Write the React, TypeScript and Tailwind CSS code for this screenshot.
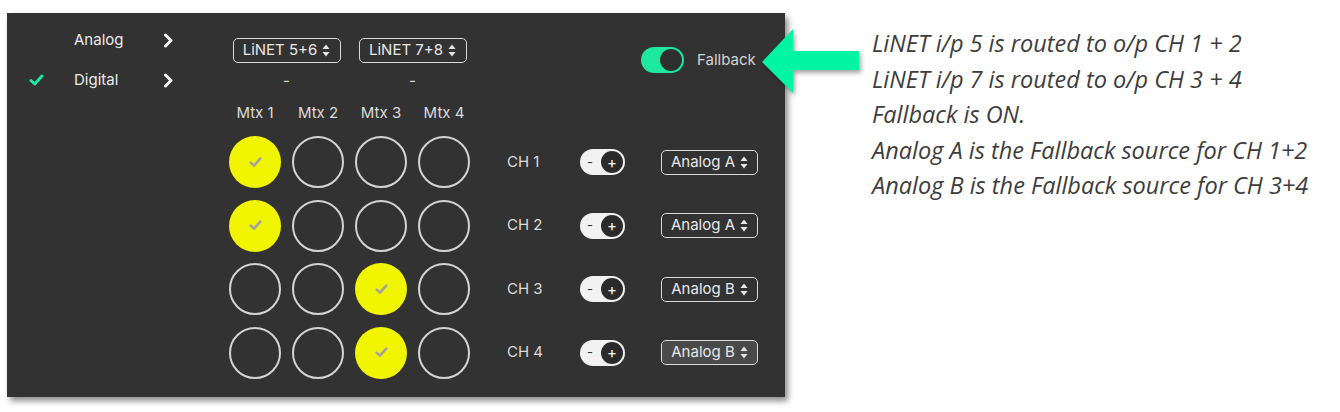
import React from 'react'

const ui = { fontFamily: 'Inter, "Liberation Sans", sans-serif' }
const note = { fontFamily: '"Open Sans", "Noto Sans", sans-serif' }

const matrix = [
  [true, false, false, false],
  [true, false, false, false],
  [false, false, true, false],
  [false, false, true, false],
]
const sources = ['Analog A', 'Analog A', 'Analog B', 'Analog B']

function UpDown() {
  return (
    <svg width="8" height="13" viewBox="0 0 8 13" className="shrink-0">
      <path d="M4 0.5 L7.5 5 L0.5 5 Z" fill="#e6e6e6" />
      <path d="M4 12.5 L7.5 8 L0.5 8 Z" fill="#e6e6e6" />
    </svg>
  )
}

function Select({ label, width, active }: { label: string; width: string; active?: boolean }) {
  return (
    <div
      className={`flex h-[25px] ${width} items-center justify-center gap-[5px] rounded-[5px] border-[1.5px] border-[#d9d9d9] text-[15px] text-[#e8e8e8] ${
        active ? 'bg-[#4a4a4a]' : ''
      }`}
    >
      <span>{label}</span>
      <UpDown />
    </div>
  )
}

function Check({ color, size }: { color: string; size: number }) {
  return (
    <svg width={size} height={size * 0.8} viewBox="0 0 15 12">
      <path d="M2 6.5 L5.8 10 L13 2" fill="none" stroke={color} strokeWidth="3" strokeLinecap="round" strokeLinejoin="round" />
    </svg>
  )
}

function Chevron() {
  return (
    <svg width="10" height="15" viewBox="0 0 10 15">
      <path d="M2.5 2 L8 7.5 L2.5 13" fill="none" stroke="#f2f2f2" strokeWidth="3" strokeLinecap="round" strokeLinejoin="round" />
    </svg>
  )
}

function Cell({ on }: { on: boolean }) {
  return on ? (
    <div className="flex h-[52px] w-[52px] items-center justify-center rounded-full bg-[#f2f500]">
      <Check color="#a3a39a" size={13} />
    </div>
  ) : (
    <div className="h-[52px] w-[52px] rounded-full border-2 border-[#d4d4d4]" />
  )
}

function PlusMinus() {
  return (
    <div className="flex h-[26px] w-[45px] items-center justify-between rounded-full bg-[#f2f2f2] pl-[7px] pr-[2px]">
      <span className="text-[13px] leading-none text-[#333]">-</span>
      <div className="flex h-[22px] w-[22px] items-center justify-center rounded-full bg-[#2a2a2a] text-[15px] leading-none text-white">
        +
      </div>
    </div>
  )
}

export default function App() {
  return (
    <div className="relative h-[412px] w-[1340px] bg-white" style={ui}>
      <div className="flex pl-[7px] pt-[13px]">
        {/* device panel */}
        <div className="relative flex h-[384px] w-[778px] shrink-0 bg-[#323232] shadow-[3px_4px_6px_rgba(0,0,0,0.45)]">
          {/* input type list */}
          <div className="relative flex w-[222px] shrink-0 flex-col pt-[16px] text-[15px] text-[#ececec]">
            <div className="flex h-[22px] items-center">
              <span className="w-[67px]" />
              <span className="w-[89px]">Analog</span>
              <Chevron />
            </div>
            <div className="mt-[18px] flex h-[22px] items-center">
              <span className="flex w-[67px] justify-start pl-[22px]">
                <Check color="#1de8a0" size={15} />
              </span>
              <span className="w-[89px]">Digital</span>
              <Chevron />
            </div>
          </div>

          {/* routing matrix */}
          <div className="flex flex-col pt-[25px] text-[15px] text-[#dcdcdc]">
            <div className="flex items-start">
              <div className="flex w-[115px] justify-center">
                <Select label="LiNET 5+6" width="w-[108px]" />
              </div>
              <div className="ml-[11px] flex w-[115px] justify-center">
                <Select label="LiNET 7+8" width="w-[108px]" />
              </div>
              <div className="ml-[171px] mt-[9px] flex items-center gap-[13px]">
                <div className="flex h-[26px] w-[43px] items-center justify-end rounded-full bg-[#1de8a0] pr-[2px]">
                  <div className="h-[22px] w-[22px] rounded-full bg-[#2f2f2f]" />
                </div>
                <span className="text-[#d4d4d4]">Fallback</span>
              </div>
            </div>
            <div className="mt-[-2px] flex h-[20px] leading-[20px]">
              <span className="w-[115px] text-center">-</span>
              <span className="ml-[11px] w-[115px] text-center">-</span>
            </div>
            <div className="mt-[11px] flex h-[22px] gap-[11px]">
              {['Mtx 1', 'Mtx 2', 'Mtx 3', 'Mtx 4'].map((m) => (
                <span key={m} className="w-[52px] whitespace-nowrap text-center">
                  {m}
                </span>
              ))}
            </div>
            <div className="mt-[12px] flex flex-col gap-[11.5px]">
              {matrix.map((row, i) => (
                <div key={i} className="flex items-center">
                  <div className="flex gap-[11px]">
                    {row.map((on, j) => (
                      <Cell key={j} on={on} />
                    ))}
                  </div>
                  <span className="ml-[37px] w-[73px]">CH {i + 1}</span>
                  <PlusMinus />
                  <div className="ml-[36px]">
                    <Select label={sources[i]} width="w-[97px]" active={i === 3} />
                  </div>
                </div>
              ))}
            </div>
          </div>
        </div>

        {/* explanation */}
        <div className="ml-[87px] flex flex-col pt-[13px] text-[23.5px] italic leading-[35.5px] text-[#3d3d3d]" style={note}>
          <span className="whitespace-nowrap">LiNET i/p 5 is routed to o/p CH 1 + 2</span>
          <span className="whitespace-nowrap">LiNET i/p 7 is routed to o/p CH 3 + 4</span>
          <span className="whitespace-nowrap">Fallback is ON.</span>
          <span className="whitespace-nowrap">Analog A is the Fallback source for CH 1+2</span>
          <span className="whitespace-nowrap">Analog B is the Fallback source for CH 3+4</span>
        </div>
      </div>

      {/* callout arrow */}
      <svg
        className="absolute left-[760px] top-[27px] drop-shadow-[2px_3px_2px_rgba(0,0,0,0.35)]"
        width="104"
        height="70"
        viewBox="0 0 104 70"
      >
        <path d="M2 35 L33 2 L33 24 L99 24 L99 43 L33 43 L33 66 Z" fill="#00f5a3" />
      </svg>
    </div>
  )
}
